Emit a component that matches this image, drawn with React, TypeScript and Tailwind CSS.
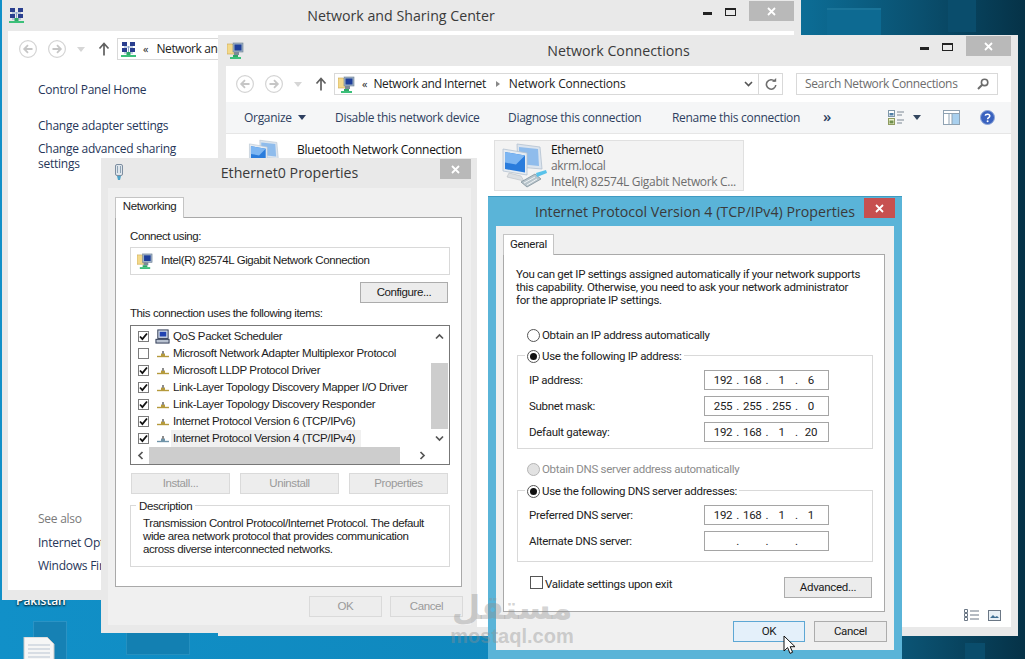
import type { ReactNode } from "react";

const NAVY = "text-[#263659]";

function NetGrid({ className = "w-[15px] h-[16px]" }: { className?: string }) {
  return (
    <svg viewBox="0 0 15 16" className={className}>
      <rect x="1" y="1" width="5" height="4" fill="#2a3f8f" />
      <rect x="9" y="1" width="5" height="4" fill="#2a3f8f" />
      <rect x="1" y="7" width="5" height="4" fill="#2a3f8f" />
      <rect x="9" y="7" width="5" height="4" fill="#2a3f8f" />
      <path d="M7.5 5v7M3 6h9M3 12h9" stroke="#8aa4c8" strokeWidth="1" />
      <rect x="5.5" y="11" width="4" height="3" fill="#2fa866" />
      <rect x="0" y="14" width="15" height="2" fill="#3cc07a" />
    </svg>
  );
}

function FolderNet({ className = "w-[17px] h-[17px]" }: { className?: string }) {
  return (
    <svg viewBox="0 0 17 17" className={className}>
      <path d="M0 2h5l1 1h3v9H0z" fill="#f3d98b" stroke="#c9a650" strokeWidth=".6" />
      <rect x="6" y="1" width="10" height="9" fill="#9db0c4" stroke="#6d7f93" strokeWidth=".6" />
      <rect x="7.5" y="2.5" width="7" height="6" fill="#1f3f9a" />
      <rect x="7" y="10" width="5" height="3" fill="#7b8a99" />
      <rect x="6" y="13" width="5" height="2" fill="#2fa866" />
      <rect x="3" y="15" width="11" height="2" fill="#3cc07a" />
    </svg>
  );
}

function Arrow({ dir }: { dir: "l" | "r" }) {
  return (
    <svg viewBox="0 0 18 18" className="w-[18px] h-[18px]">
      <circle cx="9" cy="9" r="8.4" fill="#fff" stroke="#d4d4d4" strokeWidth="1.2" />
      <path
        d={dir === "l" ? "M13.5 9H5.5M9 5.2L5.2 9 9 12.8" : "M4.5 9h8M9 5.2L12.8 9 9 12.8"}
        fill="none"
        stroke="#c6c6c6"
        strokeWidth="1.8"
      />
    </svg>
  );
}

function UpArrow() {
  return (
    <svg viewBox="0 0 12 14" className="w-[12px] h-[14px]">
      <path d="M6 13.5V2M1.5 6.5L6 1.5l4.5 5" fill="none" stroke="#5f5f5f" strokeWidth="1.7" />
    </svg>
  );
}

function Caret({ className = "" }: { className?: string }) {
  return (
    <svg viewBox="0 0 8 5" className={`w-[8px] h-[5px] ${className}`}>
      <path d="M0 0h8L4 5z" fill="currentColor" />
    </svg>
  );
}

function Monitors({ className }: { className: string }) {
  return (
    <svg viewBox="0 0 50 50" className={className}>
      <path d="M20 3l23 3 2 22-24-2z" fill="#dbe4ee" stroke="#b4c2d0" strokeWidth=".8" />
      <path d="M22 6l19 2 1 17-20-2z" fill="#8fbcec" />
      <path d="M6 8l24 4v22L6 30z" fill="#e6ecf2" stroke="#b4c2d0" strokeWidth=".8" />
      <path d="M8 11l20 3.5v17L8 28z" fill="#2a7cdc" />
      <path d="M8 11l20 3.5-9 9-11-2z" fill="#7db6f2" />
      <path d="M12 32l12 3 3 5-17-4z" fill="#dcdfe2" stroke="#b8bdc2" strokeWidth=".6" />
      <path d="M24 41l14-8 6 5-14 8z" fill="#b8c4cb" stroke="#80909a" strokeWidth=".8" />
      <path d="M27 42l11-6M30 44l10-6" stroke="#eef2f4" strokeWidth="1" />
      <path d="M40 36l10-4-1-3-10 3z" fill="#59c2ea" />
    </svg>
  );
}

function Proto({ color = "#b59a3c" }: { color?: string }) {
  return (
    <svg viewBox="0 0 12 10" className="w-[12px] h-[10px] shrink-0">
      <path d="M0 7.5h12" stroke={color} strokeWidth="1.4" />
      <path d="M4 7V4.5h4V7z" fill={color} />
      <rect x="5" y="2" width="2" height="3" fill="#8c8c8c" />
    </svg>
  );
}

function TitleBar({
  icon,
  title,
  close,
  full = false,
  h = "h-[31px]",
}: {
  icon?: ReactNode;
  title: string;
  close: string;
  full?: boolean;
  h?: string;
}) {
  return (
    <div className={`grid grid-cols-[1fr_auto_1fr] shrink-0 ${h}`}>
      <div className="flex items-center pl-[1px] pb-[1px]">{icon}</div>
      <div className="self-center text-[14.2px] leading-[20px] text-[#3a3a3a] whitespace-nowrap">{title}</div>
      <div className="flex justify-end items-start pt-[1px]">
        {full && (
          <>
            <div className="w-[9px] h-[3px] bg-[#222] mt-[11px] mr-[13px]" />
            <div className="w-[11px] h-[8px] border border-t-[2px] border-[#222] mt-[7px] mr-[13px]" />
          </>
        )}
        <div className={`flex items-center justify-center h-[20px] text-white ${close}`}>
          <svg viewBox="0 0 9 9" className="w-[9px] h-[9px]">
            <path d="M1 1l7 7M8 1L1 8" stroke="#fff" strokeWidth="1.8" />
          </svg>
        </div>
      </div>
    </div>
  );
}

function NavRow({ children, pl }: { children: ReactNode; pl: string }) {
  return (
    <div className={`flex items-center h-[36px] shrink-0 ${pl}`}>
      <Arrow dir="l" />
      <div className="ml-[11px]">
        <Arrow dir="r" />
      </div>
      <div className="ml-[11px] text-[#d6d6d6]">
        <Caret />
      </div>
      <div className="ml-[13px]">
        <UpArrow />
      </div>
      {children}
    </div>
  );
}

function Tab({ label, w, pb = "pb-[1px]" }: { label: string; w: string; pb?: string }) {
  return (
    <div
      className={`relative z-10 -mb-px h-[21px] ${pb} ${w} bg-white border border-b-0 border-[#c4c4c4] flex items-center justify-center text-[#222]`}
    >
      {label}
    </div>
  );
}

function Btn({
  label,
  w,
  h = "h-[21px]",
  tone = "normal",
}: {
  label: string;
  w: string;
  h?: string;
  tone?: "normal" | "off" | "focus";
}) {
  const look =
    tone === "off"
      ? "bg-[#ededed] border-[#dadada] text-[#9a9a9a]"
      : tone === "focus"
        ? "bg-[#e4f0fa] border-[#5da7d4] text-[#1a1a1a]"
        : "bg-[#ececec] border-[#acacac] text-[#1a1a1a]";
  return <div className={`${w} ${h} shrink-0 border flex items-center justify-center ${look}`}>{label}</div>;
}

function Check({ on = true }: { on?: boolean }) {
  return (
    <div className="w-[11px] h-[11px] shrink-0 border border-[#7c7c7c] bg-white flex items-center justify-center">
      {on && (
        <svg viewBox="0 0 9 9" className="w-[9px] h-[9px]">
          <path d="M1 4.5l2.4 2.6L8 1.5" fill="none" stroke="#111" strokeWidth="1.8" />
        </svg>
      )}
    </div>
  );
}

function ListRow({ label, on = true, active = false, icon }: { label: string; on?: boolean; active?: boolean; icon?: ReactNode }) {
  return (
    <div className="flex items-center h-[17px] pl-[7px]">
      <Check on={on} />
      <div className="ml-[8px] w-[12px] flex justify-center">{icon ?? <Proto color={active ? "#6f93a8" : "#b59a3c"} />}</div>
      <div
        className={`ml-[2px] pl-[2px] pr-[6px] h-[17px] leading-[17px] whitespace-nowrap tracking-[-0.35px] ${active ? "bg-[#f0f0f0]" : ""}`}
      >
        {label}
      </div>
    </div>
  );
}

function ScrollArrow({ d }: { d: string }) {
  return (
    <svg viewBox="0 0 9 9" className="w-[9px] h-[9px]">
      <path d={d} fill="none" stroke="#555" strokeWidth="1.7" />
    </svg>
  );
}

function Radio({ on = false, off = false }: { on?: boolean; off?: boolean }) {
  return (
    <div
      className={`w-[13px] h-[13px] rounded-full border flex items-center justify-center shrink-0 ${
        off ? "bg-[#e2e2e2] border-[#b5b5b5]" : "bg-white border-[#555]"
      }`}
    >
      {on && <div className="w-[7px] h-[7px] rounded-full bg-[#111]" />}
    </div>
  );
}

function IpField({ label, parts }: { label: string; parts: string[] }) {
  return (
    <div className="flex items-center h-[20px]">
      <div className="w-[186px] pl-[11px] pt-[1px] shrink-0 text-[#222]">{label}</div>
      <div className="w-[125px] h-[20px] border border-[#a5a5a5] bg-white flex items-center pl-[6px] pt-[1px] text-[#222]">
        {parts.map((p, i) => (
          <div key={i} className="flex items-center">
            <span className="w-[24px] text-center">{p}</span>
            {i < 3 && <span className="w-[5.3px] text-center">.</span>}
          </div>
        ))}
      </div>
    </div>
  );
}

export default function App() {
  return (
    <div className="relative w-[1025px] h-[659px] overflow-hidden font-['Open_Sans',sans-serif] bg-[linear-gradient(90deg,#1190c8_0%,#0f87bc_55%,#0c6e97_78%,#0a4f6e_90%,#053247_100%)]">
      {/* desktop wallpaper pieces */}
      <div className="absolute left-[827px] top-[8px] w-[54px] h-[40px] bg-[#0d6a92] border-t-2 border-[#1a7499]" />
      <div className="absolute left-[948px] top-0 w-[28px] h-[32px] bg-[#0a4d6c]" />
      <div className="absolute left-[33px] top-[621px] w-[34px] h-[40px] bg-[#1681b4] border border-[#2b93c4]" />
      <div className="absolute left-[126px] top-[625px] w-[64px] h-[30px] bg-[#1380b2] border border-[#2590c0]" />
      <div className="absolute left-[965px] top-[643px] w-[20px] h-[20px] bg-[#0a4d6c]" />
      <div className="absolute left-[16px] top-[593px] text-[12px] leading-[16px] text-white font-semibold [text-shadow:0_1px_2px_#000]">Pakistan</div>
      <div className="absolute left-[23px] top-[637px]">
        <svg viewBox="0 0 32 26" className="w-[32px] h-[26px]">
          <path d="M1 0h23l7 7v19H1z" fill="#f6f6f6" stroke="#c8c8c8" />
          <path d="M5 8h22M5 12h22M5 16h22M5 20h22" stroke="#b9c4d2" />
        </svg>
      </div>

      {/* Network and Sharing Center */}
      <div className="absolute left-[2px] top-0 w-[799px] h-[600px] bg-[#e9e9e9] flex flex-col pl-[6px] pr-[7px] pb-[10px]">
        <TitleBar icon={<NetGrid />} title="Network and Sharing Center" close="w-[45px] bg-[#b9b9b9]" full />
        <div className={`flex-1 bg-white flex flex-col text-[12px] ${NAVY}`}>
          <NavRow pl="pl-[11px]">
            <div className="ml-[7px] w-[640px] h-[22px] border border-[#d9d9d9] flex items-center pl-[3px] text-[#222]">
              <NetGrid />
              <span className="ml-[7px] mr-[8px] text-[11px]">«</span>
              <span className="tracking-[-0.4px]">Network and Internet</span>
            </div>
          </NavRow>
          <div className="pl-[30px] pt-[15px] flex flex-col flex-1 tracking-[-0.25px]">
            <div className="leading-[16px]">Control Panel Home</div>
            <div className="leading-[16px] mt-[20px]">Change adapter settings</div>
            <div className="leading-[15px] mt-[7px] w-[150px]">Change advanced sharing settings</div>
            <div className="mt-auto leading-[16px] text-[#7a7a7a]">See also</div>
            <div className="leading-[16px] mt-[8px]">Internet Options</div>
            <div className="leading-[16px] mt-[7px] mb-[16px]">Windows Firewall</div>
          </div>
        </div>
      </div>

      {/* Network Connections */}
      <div className="absolute left-[218px] top-[35px] w-[800px] h-[601px] bg-[#e9e9e9] flex flex-col pl-[8px] pr-[7px] pb-[9px]">
        <TitleBar icon={<FolderNet />} title="Network Connections" close="w-[45px] bg-[#b9b9b9]" full />
        <div className="flex-1 bg-white flex flex-col text-[12px] text-[#222]">
          <NavRow pl="pl-[10px]">
            <div className="ml-[7px] w-[449px] h-[22px] border border-[#d9d9d9] flex items-center pl-[3px]">
              <FolderNet />
              <span className="ml-[7px] mr-[6px] text-[11px]">«</span>
              <span className="tracking-[-0.4px]">Network and Internet</span>
              <div className="ml-[10px] mr-[9px] border-y-[3px] border-l-[4px] border-y-transparent border-l-[#888]" />
              <span className="tracking-[-0.2px]">Network Connections</span>
              <svg viewBox="0 0 9 6" className="w-[9px] h-[6px] ml-auto mr-[5px]">
                <path d="M1 1l3.5 3.5L8 1" fill="none" stroke="#555" strokeWidth="1.6" />
              </svg>
              <div className="w-[24px] h-[20px] border-l border-[#d9d9d9] flex items-center justify-center">
                <svg viewBox="0 0 12 12" className="w-[12px] h-[12px]">
                  <path d="M9.7 3.4A4.7 4.7 0 1 0 10.8 7" fill="none" stroke="#6e6e6e" strokeWidth="1.6" />
                  <path d="M7 3.8h4.2V0z" fill="#6e6e6e" />
                </svg>
              </div>
            </div>
            <div className="ml-[13px] w-[202px] h-[22px] border border-[#d9d9d9] flex items-center pl-[8px] text-[#6d6d6d] tracking-[-0.35px]">
              Search Network Connections
              <svg viewBox="0 0 12 12" className="w-[12px] h-[12px] ml-auto mr-[8px]">
                <circle cx="7.6" cy="4.4" r="3.2" fill="none" stroke="#6b6b6b" strokeWidth="1.6" />
                <path d="M5.2 6.8L1 11" stroke="#6b6b6b" strokeWidth="2" />
              </svg>
            </div>
          </NavRow>
          <div className="flex items-center h-[32px] shrink-0 bg-[#f5f6f7] border-b border-[#e6e6e6] pl-[18px] text-[#2e3f60] tracking-[-0.3px]">
            <div className="w-[91px] flex items-center">
              Organize
              <Caret className="ml-[6px] text-[#2e3f60]" />
            </div>
            <div className="w-[173px]">Disable this network device</div>
            <div className="w-[164px]">Diagnose this connection</div>
            <div className="w-[151px]">Rename this connection</div>
            <div className="w-[65px] text-[15px] leading-[14px] pb-[3px] font-semibold">»</div>
            <svg viewBox="0 0 16 15" className="w-[16px] h-[15px]">
              <rect x=".5" y=".5" width="6" height="6" fill="#fff" stroke="#7f97a8" />
              <rect x="1.5" y="3" width="4" height="2.5" fill="#4f7fa6" />
              <rect x=".5" y="8.5" width="6" height="6" fill="#eef3d0" stroke="#8e9b60" />
              <rect x="1.5" y="10.5" width="4" height="3" fill="#6f8f4c" />
              <path d="M9 2h7M9 5h5M9 10h7M9 13h5" stroke="#7d8894" />
            </svg>
            <Caret className="ml-[9px] text-[#33475f]" />
            <svg viewBox="0 0 17 15" className="w-[17px] h-[15px] ml-[22px]">
              <rect x=".5" y=".5" width="16" height="14" fill="#fff" stroke="#8fa2b2" />
              <rect x="9" y="3" width="7" height="11" fill="#a9d0ee" />
              <path d="M.5 3.5h16M6 3.5v11M9 3.5v11" stroke="#8fa2b2" />
            </svg>
            <svg viewBox="0 0 15 15" className="w-[15px] h-[15px] ml-[20px]">
              <circle cx="7.5" cy="7.5" r="7" fill="#3a62bf" stroke="#8ea6d8" />
              <path d="M5.2 5.6C5.4 3.8 9.8 3.6 9.8 6c0 1.6-2.2 1.6-2.2 3.2" fill="none" stroke="#fff" strokeWidth="1.5" />
              <circle cx="7.6" cy="11.3" r="1" fill="#fff" />
            </svg>
          </div>
          <div className="flex items-start pt-[6px] shrink-0">
            <div className="w-[268px] pl-[19px] flex items-start">
              <Monitors className="w-[37px] h-[37px] -mt-[2px]" />
              <div className="ml-[15px] leading-[16px] pt-[2px] tracking-[-0.3px] text-[#111] whitespace-nowrap">Bluetooth Network Connection</div>
            </div>
            <div className="w-[250px] h-[51px] bg-[#f3f3f3] border border-[#e0e0e0] flex">
              <Monitors className="w-[50px] h-[50px] ml-[2px] shrink-0" />
              <div className="ml-[4px] pt-[1px] leading-[16px] tracking-[-0.33px] whitespace-nowrap">
                <div className="text-[#111]">Ethernet0</div>
                <div className="text-[#6d6d6d]">akrm.local</div>
                <div className="text-[#6d6d6d]">Intel(R) 82574L Gigabit Network C...</div>
              </div>
            </div>
          </div>
          <div className="mt-auto mb-[6px] mr-[10px] flex justify-end items-center gap-[9px]">
            <svg viewBox="0 0 15 12" className="w-[15px] h-[12px]">
              <path d="M.5.5h3v3h-3zM.5 4.5h3v3h-3zM.5 8.5h3v3h-3z" fill="none" stroke="#6b7785" />
              <path d="M6 2h9M6 6h9M6 10h9" stroke="#6b7785" />
            </svg>
            <svg viewBox="0 0 13 11" className="w-[13px] h-[11px]">
              <rect x=".5" y=".5" width="12" height="10" fill="#e8f0f6" stroke="#6b7785" />
              <path d="M2 8l3-3 2 2 2-1 2 2z" fill="#3f6f93" />
            </svg>
          </div>
        </div>
      </div>

      {/* Ethernet0 Properties */}
      <div className="absolute left-[101px] top-[158px] w-[376px] h-[475px] bg-[#e9e9e9] flex flex-col pl-[7px] pr-[6px] pb-[8px]">
        <TitleBar
          icon={
            <svg viewBox="0 0 10 17" className="w-[10px] h-[17px] ml-[5px]">
              <rect x="1.5" y=".5" width="7" height="11" rx="1.5" fill="#dfe6ec" stroke="#7d8ea0" />
              <path d="M3.5 2v7M6.5 2v7" stroke="#8fa3b5" />
              <path d="M3 12h4l-1 4H4z" fill="#4da3c9" />
            </svg>
          }
          title="Ethernet0 Properties"
          close="w-[31px] bg-[#b9b9b9]"
          h="h-[30px]"
        />
        <div className="flex-1 bg-[#f0f0f0] flex flex-col pt-[9px] pl-[7px] font-['Liberation_Sans',sans-serif] text-[11.5px] tracking-[-0.4px] text-[#1c1c1c]">
          <Tab label="Networking" w="w-[69px]" pb="pb-[2px]" />
          <div className="w-[347px] h-[370px] shrink-0 bg-white border border-[#a9a9a9] pl-[14px] flex flex-col">
            <div className="mt-[11px] leading-[14px]">Connect using:</div>
            <div className="mt-[4px] w-[320px] h-[28px] border border-[#d9d9d9] flex items-center pl-[6px]">
              <FolderNet className="w-[16px] h-[16px]" />
              <span className="ml-[8px] pb-[1px]">Intel(R) 82574L Gigabit Network Connection</span>
            </div>
            <div className="mt-[7px] ml-[230px]">
              <Btn label="Configure..." w="w-[88px]" />
            </div>
            <div className="mt-[3px] leading-[14px]">This connection uses the following items:</div>
            <div className="mt-[5px] w-[320px] h-[140px] border border-[#777] flex flex-col overflow-hidden">
              <div className="flex h-[121px]">
                <div className="flex-1 pt-[2px] w-0">
                  <ListRow
                    label="QoS Packet Scheduler"
                    icon={
                      <svg viewBox="0 0 16 16" className="w-[15px] h-[15px] shrink-0 -ml-[2px]">
                        <rect x="3" y="1" width="11" height="9" fill="#cfd8e6" stroke="#2a3550" />
                        <rect x="5" y="3" width="7" height="5" fill="#2142b0" />
                        <rect x="1" y="11" width="14" height="4" fill="#b9c2d0" stroke="#2a3550" />
                      </svg>
                    }
                  />
                  <ListRow label="Microsoft Network Adapter Multiplexor Protocol" on={false} />
                  <ListRow label="Microsoft LLDP Protocol Driver" />
                  <ListRow label="Link-Layer Topology Discovery Mapper I/O Driver" />
                  <ListRow label="Link-Layer Topology Discovery Responder" />
                  <ListRow label="Internet Protocol Version 6 (TCP/IPv6)" />
                  <ListRow label="Internet Protocol Version 4 (TCP/IPv4)" active />
                </div>
                <div className="w-[17px] mr-[1px] shrink-0 flex flex-col">
                  <div className="h-[20px] flex items-center justify-center">
                    <ScrollArrow d="M1 6.5l3.5-3.5L8 6.5" />
                  </div>
                  <div className="h-[17px]" />
                  <div className="h-[66px] bg-[#cdcdcd]" />
                  <div className="h-[18px] flex items-center justify-center">
                    <ScrollArrow d="M1 2.5L4.5 6 8 2.5" />
                  </div>
                </div>
              </div>
              <div className="flex h-[17px] shrink-0">
                <div className="w-[18px] flex items-center justify-center">
                  <ScrollArrow d="M6.5 1L3 4.5 6.5 8" />
                </div>
                <div className="w-[251px] bg-[#cdcdcd]" />
                <div className="w-[14px]" />
                <div className="w-[17px] flex items-center justify-center">
                  <ScrollArrow d="M2.5 1L6 4.5 2.5 8" />
                </div>
              </div>
            </div>
            <div className="mt-[8px] ml-[1px] flex gap-[10px]">
              <Btn label="Install..." w="w-[99px]" tone="off" />
              <Btn label="Uninstall" w="w-[99px]" tone="off" />
              <Btn label="Properties" w="w-[99px]" tone="off" />
            </div>
            <div className="relative mt-[11px] w-[320px] h-[62px] border border-[#d9d9d9] pt-[11px] pl-[12px] leading-[13px]">
              <span className="absolute -top-[7px] left-[5px] bg-white px-[3px] leading-[14px]">Description</span>
              Transmission Control Protocol/Internet Protocol. The default
              <br />
              wide area network protocol that provides communication
              <br />
              across diverse interconnected networks.
            </div>
          </div>
          <div className="mt-[9px] pr-[8px] flex justify-end gap-[8px]">
            <Btn label="OK" w="w-[73px]" tone="off" />
            <Btn label="Cancel" w="w-[73px]" tone="off" />
          </div>
        </div>
      </div>

      {/* IPv4 Properties */}
      <div className="absolute left-[488px] top-[196px] w-[414px] h-[463px] bg-[#5ab4d8] flex flex-col pl-[8px] pr-[8px] pb-[9px] border-t border-[#3f9bc2]">
        <TitleBar title="Internet Protocol Version 4 (TCP/IPv4) Properties" close="w-[31px] bg-[#c75050] -mr-[1px]" h="h-[29px]" />
        <div className="flex-1 bg-[#f0f0f0] flex flex-col pt-[8px] pl-[7px] font-['Roboto',sans-serif] text-[11.5px] tracking-[-0.3px] text-[#222]">
          <Tab label="General" w="w-[51px]" />
          <div className="w-[382px] h-[358px] shrink-0 bg-white border border-[#a9a9a9] flex flex-col">
            <div className="mt-[13px] ml-[12px] leading-[13px] whitespace-nowrap">
              You can get IP settings assigned automatically if your network supports
              <br />
              this capability. Otherwise, you need to ask your network administrator
              <br />
              for the appropriate IP settings.
            </div>
            <div className="mt-[21px] ml-[23px] h-[14px] flex items-center gap-[2px]">
              <Radio />
              <span className="pt-[1px]">Obtain an IP address automatically</span>
            </div>
            <div className="relative mt-[13px] ml-[13px] w-[356px] h-[94px] border border-[#d9d9d9] pt-[14px] flex flex-col gap-[6px]">
              <div className="absolute -top-[7px] left-[7px] bg-white px-[2px] flex items-center gap-[2px] leading-[14px]">
                <Radio on />
                <span>Use the following IP address:</span>
              </div>
              <IpField label="IP address:" parts={["192", "168", "1", "6"]} />
              <IpField label="Subnet mask:" parts={["255", "255", "255", "0"]} />
              <IpField label="Default gateway:" parts={["192", "168", "1", "20"]} />
            </div>
            <div className="mt-[13px] ml-[23px] h-[14px] flex items-center gap-[2px] text-[#8c8c8c]">
              <Radio off />
              <span className="pt-[1px]">Obtain DNS server address automatically</span>
            </div>
            <div className="relative mt-[14px] ml-[13px] w-[356px] h-[72px] border border-[#d9d9d9] pt-[14px] flex flex-col gap-[6px]">
              <div className="absolute -top-[7px] left-[7px] bg-white px-[2px] flex items-center gap-[2px] leading-[14px]">
                <Radio on />
                <span>Use the following DNS server addresses:</span>
              </div>
              <IpField label="Preferred DNS server:" parts={["192", "168", "1", "1"]} />
              <IpField label="Alternate DNS server:" parts={["", "", "", ""]} />
            </div>
            <div className="mt-[15px] pl-[26px] pr-[12px] flex items-start">
              <div className="w-[13px] h-[13px] border border-[#555] bg-white mt-[-1px]" />
              <span className="ml-[2px] leading-[14px]">Validate settings upon exit</span>
              <div className="ml-auto">
                <Btn label="Advanced..." w="w-[88px]" />
              </div>
            </div>
          </div>
          <div className="mt-[9px] pr-[7px] flex justify-end gap-[9px]">
            <Btn label="OK" w="w-[72px]" tone="focus" />
            <Btn label="Cancel" w="w-[73px]" />
          </div>
        </div>
      </div>

      {/* watermark */}
      <div className="absolute left-[447px] top-[590px] w-[130px] flex flex-col items-center pointer-events-none text-[#8f8f8f]/40">
        <div className="text-[33px] leading-[36px] font-bold font-['DejaVu_Sans',sans-serif]" dir="rtl">
          مستقل
        </div>
        <div className="text-[20px] leading-[20px] font-bold font-['Liberation_Sans',sans-serif]">mostaql.com</div>
      </div>

      {/* mouse pointer */}
      <svg viewBox="0 0 13 20" className="absolute left-[783px] top-[635px] w-[13px] h-[20px]">
        <path d="M1 1v15l3.6-3.4L7 18.4l2.6-1.1-2.4-5.6H12z" fill="#fff" stroke="#111" strokeWidth="1" />
      </svg>
    </div>
  );
}
